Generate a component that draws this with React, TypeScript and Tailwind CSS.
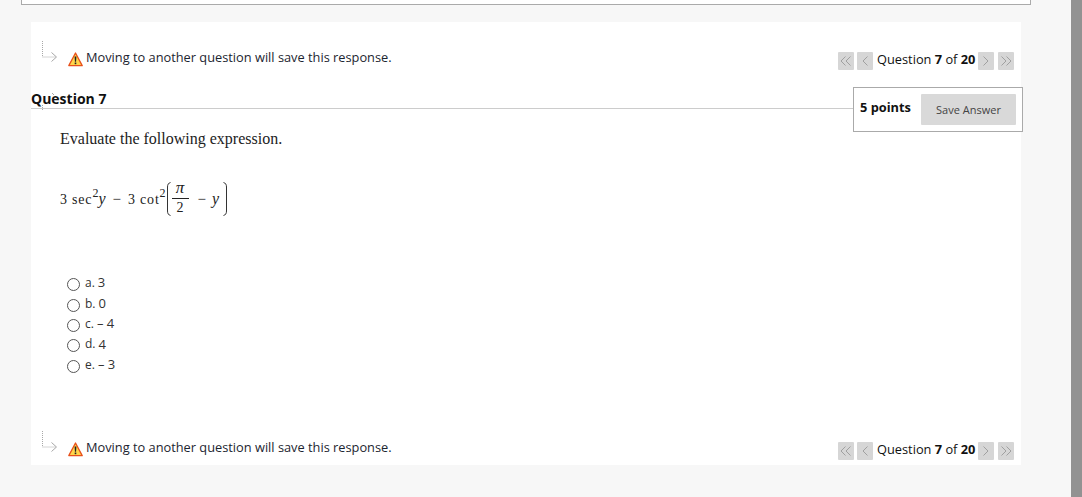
import React from 'react';

const openSans = { fontFamily: '"Open Sans", sans-serif' };
const timesFont = { fontFamily: '"Liberation Serif", serif' };

const options = [
  { key: 'a', value: '3' },
  { key: 'b', value: '0' },
  { key: 'c', value: '– 4' },
  { key: 'd', value: '4' },
  { key: 'e', value: '– 3' },
];

const ElbowArrow: React.FC = () => (
  <svg width="16" height="21" viewBox="0 0 16 21" fill="none" stroke="#a8a8a8" strokeWidth="1" className="shrink-0">
    <path d="M.5 0v16h13" strokeDasharray="1 1" />
    <path d="M9.5 11.5l5 4.5-5 4.5" />
  </svg>
);

const WarningIcon: React.FC = () => (
  <svg width="15" height="15" viewBox="0 0 15 15" className="shrink-0">
    <path d="M7.5 1L14.2 13.6H.8z" fill="#ffd54a" stroke="#e8501c" strokeWidth="1.3" strokeLinejoin="round" />
    <path d="M6.6 4.4h1.8l-.3 5.4H6.9z" fill="#222" />
    <rect x="6.7" y="10.5" width="1.6" height="1.7" fill="#222" />
  </svg>
);

const NavButton: React.FC<{ kind: 'first' | 'prev' | 'next' | 'last' }> = ({ kind }) => {
  const paths = {
    first: ['M7.5 4.5L3 9l4.5 4.5', 'M12.5 4.5L8 9l4.5 4.5'],
    prev: ['M10.5 4.5L6 9l4.5 4.5'],
    next: ['M5.5 4.5L10 9l-4.5 4.5'],
    last: ['M3.5 4.5L8 9l-4.5 4.5', 'M8.5 4.5L13 9l-4.5 4.5'],
  }[kind];
  return (
    <span className="block w-4 h-[18px] rounded-[1px] bg-[#d6d6d6] shrink-0">
      <svg width="16" height="18" viewBox="0 0 16 18" fill="none" stroke="#a0a0a0" strokeWidth="1">
        {paths.map((d) => (
          <path key={d} d={d} />
        ))}
      </svg>
    </span>
  );
};

const ActionBar: React.FC = () => (
  <div className="flex items-start justify-between pl-[11px] pr-[7px]">
    <div className="flex items-start">
      <ElbowArrow />
      <div className="ml-[10px] mt-[11px] flex items-center gap-[3px] text-[12.8px] leading-[15px] text-[#1c2530]">
        <WarningIcon />
        <span className="-mt-[4px]">Moving to another question will save this response.</span>
      </div>
    </div>
    <div className="flex items-center mt-[11px] gap-[3px]">
      <NavButton kind="first" />
      <NavButton kind="prev" />
      <span className="w-[99px] pl-[1px] -mt-[4px] text-[12.8px] leading-[18px] text-[#111] whitespace-nowrap">
        Question <b>7</b> of <b>20</b>
      </span>
      <NavButton kind="next" />
      <span className="ml-[1px]">
        <NavButton kind="last" />
      </span>
    </div>
  </div>
);

const Bracket: React.FC<{ flip?: boolean }> = ({ flip }) => (
  <svg width="5" height="34" viewBox="0 0 5 34" fill="none" stroke="#333" strokeWidth="1" className={flip ? 'rotate-180' : ''}>
    <path d="M4.5 .5C2.5 1 1.5 2.5 1.5 5v24c0 2.5 1 4 3 4.5" />
  </svg>
);

const Expression: React.FC = () => (
  <div className="flex items-center h-[34px] text-[14px] text-[#222] whitespace-pre" style={timesFont}>
    <span className="tracking-[0.8px]">3 sec</span>
    <span className="text-[12px] leading-none -mt-[12px] w-[5px]">2</span>
    <i className="text-[16px] ml-[1px]">y</i>
    <span className="ml-[7px] text-[15px]">−</span>
    <span className="ml-[7px] tracking-[0.8px]">3 cot</span>
    <span className="text-[12px] leading-none -mt-[12px] w-[6px]">2</span>
    <Bracket />
    <span className="ml-[1px] w-[17px] flex flex-col items-center">
      <i className="text-[17px] leading-[15px] -mt-[4px] mb-[3px] h-[15px]">π</i>
      <span className="w-full border-t border-[#222]" />
      <span className="text-[14px] leading-[15px] h-[15px] mt-[1px]">2</span>
    </span>
    <span className="ml-[9px] text-[15px]">−</span>
    <i className="ml-[6px] text-[16px]">y</i>
    <span className="ml-[4px]">
      <Bracket flip />
    </span>
  </div>
);

const App: React.FC = () => (
  <div className="w-[1082px] h-[497px] overflow-hidden flex bg-[#f7f7f7]" style={openSans}>
    <div className="flex-1 min-w-0">
      <div className="ml-[21px] w-[1010px] h-[5px] bg-white border-x border-b border-[#aaaaaa]" />
      <div className="ml-[31px] mt-[17px] w-[990px] h-[443px] bg-white flex flex-col">
        <div className="pt-[19px]">
          <ActionBar />
        </div>

        {/* Question header */}
        <div className="relative mt-[17px] h-[44px] flex items-start">
          <svg width="24" height="20" viewBox="0 0 24 20" fill="none" stroke="#a8a8a8" strokeWidth="1" className="absolute left-[10px] top-[5px]">
            <path d="M1.5 13v5" strokeDasharray="1 1" />
            <path d="M11 1l2 2" />
          </svg>
          <div className="flex-1 h-[22px] border-b border-[#cccccc]">
            <h2 className="relative text-[14px] leading-[24px] font-bold text-[#111]">Question 7</h2>
          </div>
          <div className="w-[170px] h-[45px] -mr-[2px] border border-[#aaaaaa] bg-white flex items-center justify-between pl-[6px] pr-[6px]">
            <span className="text-[12.8px] font-bold text-[#111] -mt-[3px]">5 points</span>
            <span className="w-[95px] h-[31px] rounded-[1px] bg-[#d9d9d9] flex items-center justify-center text-[11px] text-[#444] pt-[2px]">
              Save Answer
            </span>
          </div>
        </div>

        <p className="mt-[-2px] ml-[29px] text-[16px] leading-[20px] text-[#222]" style={timesFont}>
          Evaluate the following expression.
        </p>

        <div className="ml-[29px] mt-[33px]">
          <Expression />
        </div>

        <ul className="ml-[36px] mt-[57px]">
          {options.map((o) => (
            <li key={o.key} className="h-[20.4px] flex items-center text-[12px] text-[#333]">
              <span className="w-[13px] h-[13px] rounded-full border border-[#555] bg-white shrink-0 mt-[3px]" />
              <span className="ml-[5px]">{o.key}.</span>
              <span className="ml-[3px] text-[13px]">{o.value}</span>
            </li>
          ))}
        </ul>

        <div className="mt-auto pb-[5px]">
          <ActionBar />
        </div>
      </div>
    </div>
    <div className="w-[11px] bg-[#929292] shrink-0" />
  </div>
);

export default App;
